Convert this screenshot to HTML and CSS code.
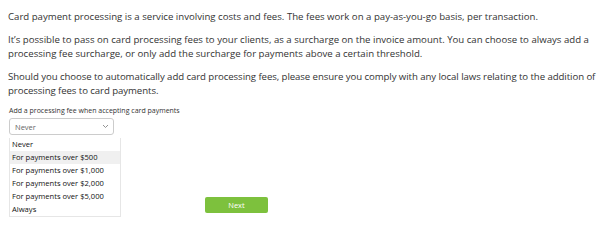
FILE: index.html
```html
<!DOCTYPE html>
<html>
<head>
<meta charset="utf-8">
<link rel="stylesheet" href="styles.css">
</head>
<body>
<div class="page">
  <p class="para">Card payment processing is a service involving costs and fees. The fees work on a pay-as-you-go basis, per transaction.</p>
  <p class="para">It’s possible to pass on card processing fees to your clients, as a surcharge on the invoice amount. You can choose to always add a processing fee surcharge, or only add the surcharge for payments above a certain threshold.</p>
  <p class="para para-tight">Should you choose to automatically add card processing fees, please ensure you comply with any local laws relating to the addition of processing fees to card payments.</p>
  <div class="field">
    <label class="label">Add a processing fee when accepting card payments</label>
    <div class="select">
      <span class="select-value">Never</span>
      <svg class="chev" width="7" height="5" viewBox="0 0 7 5"><path d="M1 1 L3.5 3.5 L6 1" fill="none" stroke="#888" stroke-width="0.9"/></svg>
    </div>
    <div class="row">
      <ul class="options">
        <li>Never</li>
        <li class="active">For payments over $500</li>
        <li>For payments over $1,000</li>
        <li>For payments over $2,000</li>
        <li>For payments over $5,000</li>
        <li>Always</li>
      </ul>
      <div class="actions">
        <button class="btn">Next</button>
      </div>
    </div>
  </div>
</div>
</body>
</html>
```

FILE: styles.css
```css
* { box-sizing: border-box; }
html, body { margin: 0; padding: 0; background: #fff; overflow: hidden; }
body {
  font-family: "Open Sans", "Liberation Sans", sans-serif;
  color: #333;
}
.page { padding: 10px 0 0 8px; }
.para {
  margin: 0 0 9px 0;
  font-size: 9.65px;
  line-height: 14px;
}
.para-tight { letter-spacing: -0.075px; }
.label {
  display: block;
  font-size: 7px;
  line-height: 10px;
  color: #333;
  margin-top: -1px;
  margin-bottom: 2px;
  padding-left: 1px;
}
.select {
  margin-left: 1px;
  width: 105px;
  height: 17px;
  border: 1px solid #ccc;
  border-radius: 3px;
  display: flex;
  align-items: center;
  justify-content: space-between;
  padding: 0 4px 0 5px;
  font-size: 7.5px;
  color: #666;
}
.row { display: flex; align-items: flex-end; margin-top: 3px; }
.options {
  list-style: none;
  margin: 0 0 0 1px;
  padding: 0;
  width: 112px;
  border: 1px solid #e6e6e6;
  border-top: none;
  font-size: 7.6px;
  color: #111;
}
.options li { height: 13px; line-height: 13px; padding-left: 2px; }
.options li.active { background: #f0f0f0; }
.actions { margin-left: 84px; margin-bottom: 4px; }
.btn {
  display: block;
  width: 63px;
  height: 16px;
  border: none;
  border-radius: 2px;
  background: #7dc13d;
  color: #fff;
  font-family: "Open Sans", "Liberation Sans", sans-serif;
  font-size: 7.5px;
  padding: 0;
}
```
